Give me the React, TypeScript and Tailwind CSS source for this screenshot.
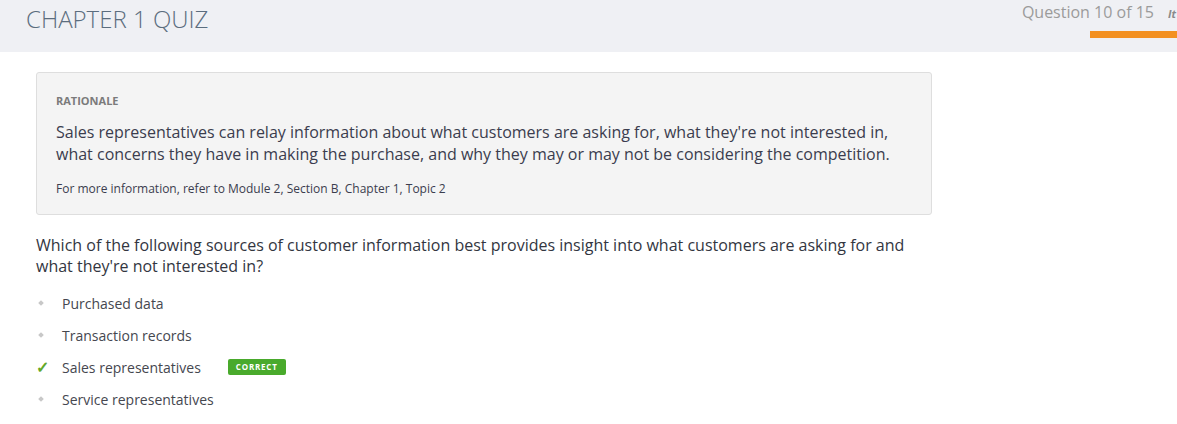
import React from "react";

const options = [
  { label: "Purchased data", correct: false },
  { label: "Transaction records", correct: false },
  { label: "Sales representatives", correct: true },
  { label: "Service representatives", correct: false },
];

const App: React.FC = () => {
  return (
    <div className="min-h-screen bg-white overflow-hidden" style={{ fontFamily: '"Open Sans", sans-serif' }}>
      {/* Header */}
      <div className="h-[52px] bg-[#eff0f4] flex justify-between">
        <h1 className="pl-[26px] pt-[3px] text-[24px] leading-[32px] font-light text-[#5b6d7e]">
          CHAPTER 1 QUIZ
        </h1>
        <div className="flex flex-col items-end">
          <div className="flex items-baseline pt-[1px] whitespace-nowrap">
            <span className="text-[16px] leading-[22px] text-[#9b9b9b]">Question 10 of 15</span>
            <span className="ml-[14px] mr-[-2px] w-[11px] overflow-hidden text-[11px] italic font-bold text-[#8a8a8a]">It</span>
          </div>
          <div className="mt-[8px] w-[87px] h-[7px] bg-[#f39021]" />
        </div>
      </div>

      {/* Content */}
      <div className="pl-[36px] pt-[20px] w-[932px]">
        <div className="bg-[#f4f4f4] border border-[#dedede] rounded-[3px] px-[19px] pt-[20px] pb-[16px]">
          <div className="text-[11px] leading-[16px] font-bold text-[#7b7b7b]">RATIONALE</div>
          <p className="mt-[12px] text-[16px] leading-[22px] text-[#3b3d4e]">
            Sales representatives can relay information about what customers are asking for, what they're not interested in,
            what concerns they have in making the purchase, and why they may or may not be considering the competition.
          </p>
          <p className="mt-[15px] text-[12px] leading-[18px] text-[#3b3d4e]">
            For more information, refer to Module 2, Section B, Chapter 1, Topic 2
          </p>
        </div>

        <p className="mt-[20px] text-[16px] leading-[21px] text-[#33363f]">
          Which of the following sources of customer information best provides insight into what customers are asking for and
          what they're not interested in?
        </p>

        <ul className="mt-[15px] flex flex-col gap-[10px]">
          {options.map((o) => (
            <li key={o.label} className="flex items-center h-[22px]">
              <span className="w-[26px] flex items-center">
                {o.correct ? (
                  <span className="text-[16px] leading-none text-[#62a82a] font-bold">✓</span>
                ) : (
                  <span className="ml-[3px] w-[4px] h-[4px] rotate-45 bg-[#c8c8c8]" />
                )}
              </span>
              <span className="text-[14px] text-[#45474f]">{o.label}</span>
              {o.correct && (
                <span className="ml-[27px] px-[8px] h-[16px] flex items-center rounded-[2px] bg-[#49aa2c] text-white text-[8px] font-bold tracking-[0.8px]">
                  CORRECT
                </span>
              )}
            </li>
          ))}
        </ul>
      </div>
    </div>
  );
};

export default App;
